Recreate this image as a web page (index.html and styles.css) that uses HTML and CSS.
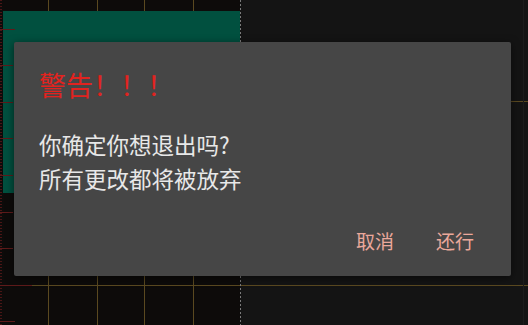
FILE: index.html
```html
<!DOCTYPE html>
<html lang="zh-CN">
	<head>
		<meta charset="UTF-8" />
		<meta name="viewport" content="width=device-width, initial-scale=1.0" />
		<title>警告</title>
		<link rel="stylesheet" href="styles.css">
	</head>
	<body>
		<div class="stage">
			<svg class="backdrop" width="528" height="325" viewBox="0 0 528 325">
				<rect x="0" y="0" width="528" height="325" fill="#141414" />
				<rect x="0" y="0" width="240" height="325" fill="#0d0b0a" />
				<g stroke="#5a4920" stroke-width="1">
					<line x1="48.5" y1="0" x2="48.5" y2="325" />
					<line x1="97.5" y1="0" x2="97.5" y2="325" />
					<line x1="144.5" y1="0" x2="144.5" y2="325" />
					<line x1="193.5" y1="0" x2="193.5" y2="325" />
					<line x1="0" y1="285.5" x2="528" y2="285.5" />
					<line x1="240" y1="101.5" x2="528" y2="101.5" />
				</g>
				<rect x="3" y="11" width="237" height="182" fill="#01503f" />
				<line x1="240.5" y1="0" x2="240.5" y2="325" stroke="#7a7a7a" stroke-dasharray="2 2" />
				<line x1="523.5" y1="0" x2="523.5" y2="325" stroke="#1c1c1c" />
				<line x1="1" y1="0" x2="1" y2="325" stroke="#4a1616" stroke-width="2" stroke-dasharray="1 2" />
				<g stroke="#5e1a1a" stroke-width="1">
					<line x1="0" y1="29.5" x2="15" y2="29.5" />
					<line x1="0" y1="65.5" x2="13" y2="65.5" />
					<line x1="0" y1="102.5" x2="13" y2="102.5" />
					<line x1="0" y1="138.5" x2="13" y2="138.5" />
					<line x1="0" y1="175.5" x2="13" y2="175.5" />
					<line x1="0" y1="212.5" x2="13" y2="212.5" />
					<line x1="0" y1="248.5" x2="13" y2="248.5" />
					<line x1="0" y1="285.5" x2="32" y2="285.5" />
					<line x1="0" y1="321.5" x2="15" y2="321.5" />
				</g>
			</svg>

			<div class="dialog">
				<h2 class="dialog-title">警告！！！</h2>
				<p class="dialog-msg">你确定你想退出吗?<br>所有更改都将被放弃</p>
				<div class="dialog-actions">
					<button class="dialog-btn">取消</button>
					<button class="dialog-btn">还行</button>
				</div>
			</div>
		</div>
	</body>
</html>
```

FILE: styles.css
```css
body {
	margin: 0;
	background-color: #141414;
	font-family: "Noto Sans CJK SC", "Noto Sans", sans-serif;
	overflow: hidden;
}

.stage {
	position: relative;
	width: 528px;
	height: 325px;
}

.backdrop {
	display: block;
}

.dialog {
	position: absolute;
	left: 14px;
	top: 42px;
	width: 497px;
	height: 234px;
	box-sizing: border-box;
	padding: 25px 25px 0 25px;
	background-color: #464646;
	border-radius: 2px;
	box-shadow: 0 2px 8px rgba(0, 0, 0, 0.55);
}

.dialog-title {
	margin: 0;
	font-size: 27px;
	line-height: 35px;
	font-weight: normal;
	color: #e2231f;
}

.dialog-msg {
	margin: 25px 0 0 0;
	font-size: 22.5px;
	line-height: 34px;
	color: #e8e8e8;
}

.dialog-actions {
	display: flex;
	justify-content: flex-end;
	gap: 18px;
	margin-top: 27px;
}

.dialog-btn {
	height: 36px;
	padding: 0 12px;
	border: none;
	background: none;
	font-family: inherit;
	font-size: 19px;
	color: #eba89b;
	cursor: pointer;
}
```
